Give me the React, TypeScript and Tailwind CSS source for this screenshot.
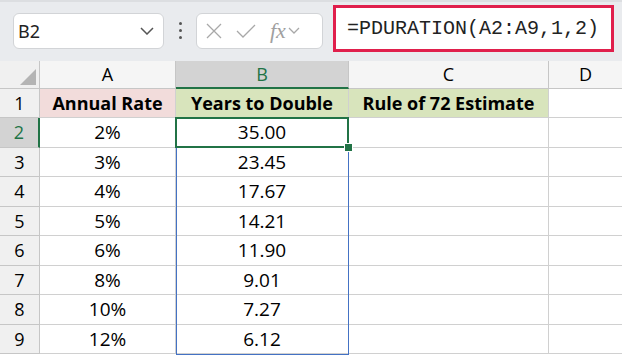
import { Fragment } from "react";

const rows = [
  { n: 1, a: "Annual Rate", b: "Years to Double", c: "Rule of 72 Estimate", h: "h-[29px]" },
  { n: 2, a: "2%", b: "35.00", h: "h-[30px]" },
  { n: 3, a: "3%", b: "23.45", h: "h-[29px]" },
  { n: 4, a: "4%", b: "17.67", h: "h-[30px]" },
  { n: 5, a: "5%", b: "14.21", h: "h-[29px]" },
  { n: 6, a: "6%", b: "11.90", h: "h-[30px]" },
  { n: 7, a: "8%", b: "9.01", h: "h-[29px]" },
  { n: 8, a: "10%", b: "7.27", h: "h-[30px]" },
  { n: 9, a: "12%", b: "6.12", h: "h-[29px]" },
];

const cell = "border-r border-b border-[#d0d0d0] flex items-center justify-center";

export default function App() {
  return (
    <div className="w-[622px] h-[358px] overflow-hidden bg-white font-['Open_Sans',sans-serif] text-black">
      {/* formula bar */}
      <div className="h-[61px] bg-[#e9ebee] border-t-2 border-[#dcdee1] flex items-start">
        <div className="ml-[13px] mt-[11px] w-[151px] h-[36px] bg-white border border-[#d2d4d7] rounded-[6px] flex items-center justify-between pl-[4px] pr-[9px]">
          <span className="text-[18px] text-[#222] font-['Noto_Sans',sans-serif]">B2</span>
          <svg width="14" height="8" viewBox="0 0 14 8">
            <path d="M1 1 L7 7 L13 1" fill="none" stroke="#555" strokeWidth="1.5" />
          </svg>
        </div>
        <div className="w-[32px] h-[58px] flex flex-col items-center justify-center gap-[4px] pb-[2px]">
          <span className="w-[3px] h-[3px] rounded-full bg-[#555]" />
          <span className="w-[3px] h-[3px] rounded-full bg-[#555]" />
          <span className="w-[3px] h-[3px] rounded-full bg-[#555]" />
        </div>
        <div className="mt-[11px] w-[127px] h-[36px] bg-white border border-[#d2d4d7] rounded-[6px] flex items-center pl-[9px] gap-[14px]">
          <svg width="16" height="16" viewBox="0 0 16 16">
            <path d="M1 1 L15 15 M15 1 L1 15" stroke="#a8a8a8" strokeWidth="1.3" />
          </svg>
          <svg width="20" height="16" viewBox="0 0 20 16">
            <path d="M1 8 L7 14 L19 2" fill="none" stroke="#a8a8a8" strokeWidth="1.3" />
          </svg>
          <div className="flex items-center gap-[2px]">
            <span className="font-['Liberation_Serif',serif] italic text-[22px] text-[#a0a0a0] leading-none">fx</span>
            <svg width="12" height="8" viewBox="0 0 12 8">
              <path d="M1 1 L6 6 L11 1" fill="none" stroke="#a8a8a8" strokeWidth="1.3" />
            </svg>
          </div>
        </div>
        <div className="ml-[10px] mt-[3px] w-[281px] h-[47px] bg-white border-[3px] border-[#e01f4c] flex items-center pl-[11px]">
          <span className="font-['Liberation_Mono',monospace] text-[20px] text-[#222]">=PDURATION(A2:A9,1,2)</span>
        </div>
      </div>

      {/* grid */}
      <div className="relative">
        <div className="grid grid-cols-[40px_136px_173px_200px_73px]">
          {/* header row */}
          <div className="h-[28px] bg-[#f0f0f0] border-r border-b border-[#c6c6c6] relative">
            <svg className="absolute right-[3px] bottom-[3px]" width="16" height="16" viewBox="0 0 16 16">
              <path d="M16 0 L16 16 L0 16 Z" fill="#b4b4b4" />
            </svg>
          </div>
          <div className="h-[28px] bg-[#f5f5f5] border-r border-b border-[#c6c6c6] flex items-center justify-center text-[18px]">A</div>
          <div className="h-[28px] bg-[#d3d3d3] border-r border-b-2 border-b-[#217346] border-r-[#c6c6c6] flex items-center justify-center text-[18px] text-[#217346]">B</div>
          <div className="h-[28px] bg-[#f5f5f5] border-r border-b border-[#c6c6c6] flex items-center justify-center text-[18px]">C</div>
          <div className="h-[28px] bg-[#f5f5f5] border-b border-[#c6c6c6] flex items-center justify-center text-[18px]">D</div>

          {rows.map((r) => (
            <Fragment key={r.n}>
              <div
                className={`${r.h} ${
                  r.n === 2
                    ? "bg-[#d3d3d3] text-[#217346] border-r-2 border-r-[#217346]"
                    : "bg-[#f0f0f0] border-r border-r-[#c6c6c6]"
                } border-b border-b-[#c6c6c6] flex items-center justify-center text-[18px]`}
              >
                {r.n}
              </div>
              <div className={`${r.h} ${cell} ${r.n === 1 ? "bg-[#f2dcdb] font-bold text-[18px]" : "text-[19px]"}`}>{r.a}</div>
              <div className={`${r.h} ${cell} ${r.n === 1 ? "bg-[#d8e4bc] font-bold text-[18px]" : "text-[19px]"}`}>{r.b}</div>
              <div className={`${r.h} ${cell} ${r.n === 1 ? "bg-[#d8e4bc] font-bold text-[18px]" : "text-[19px]"}`}>{r.c}</div>
              <div className={`${r.h} border-b border-[#d0d0d0]`} />
            </Fragment>
          ))}
        </div>

        {/* range highlight B2:B9 */}
        <div className="absolute left-[176px] top-[57px] w-[173px] h-[237px] border border-[#4472c4] pointer-events-none" />
        {/* active cell B2 */}
        <div className="absolute left-[175px] top-[56px] w-[174px] h-[31px] border-2 border-[#217346] pointer-events-none" />
        <div className="absolute left-[344px] top-[82px] w-[9px] h-[9px] bg-[#217346] border border-white pointer-events-none" />
      </div>
    </div>
  );
}
